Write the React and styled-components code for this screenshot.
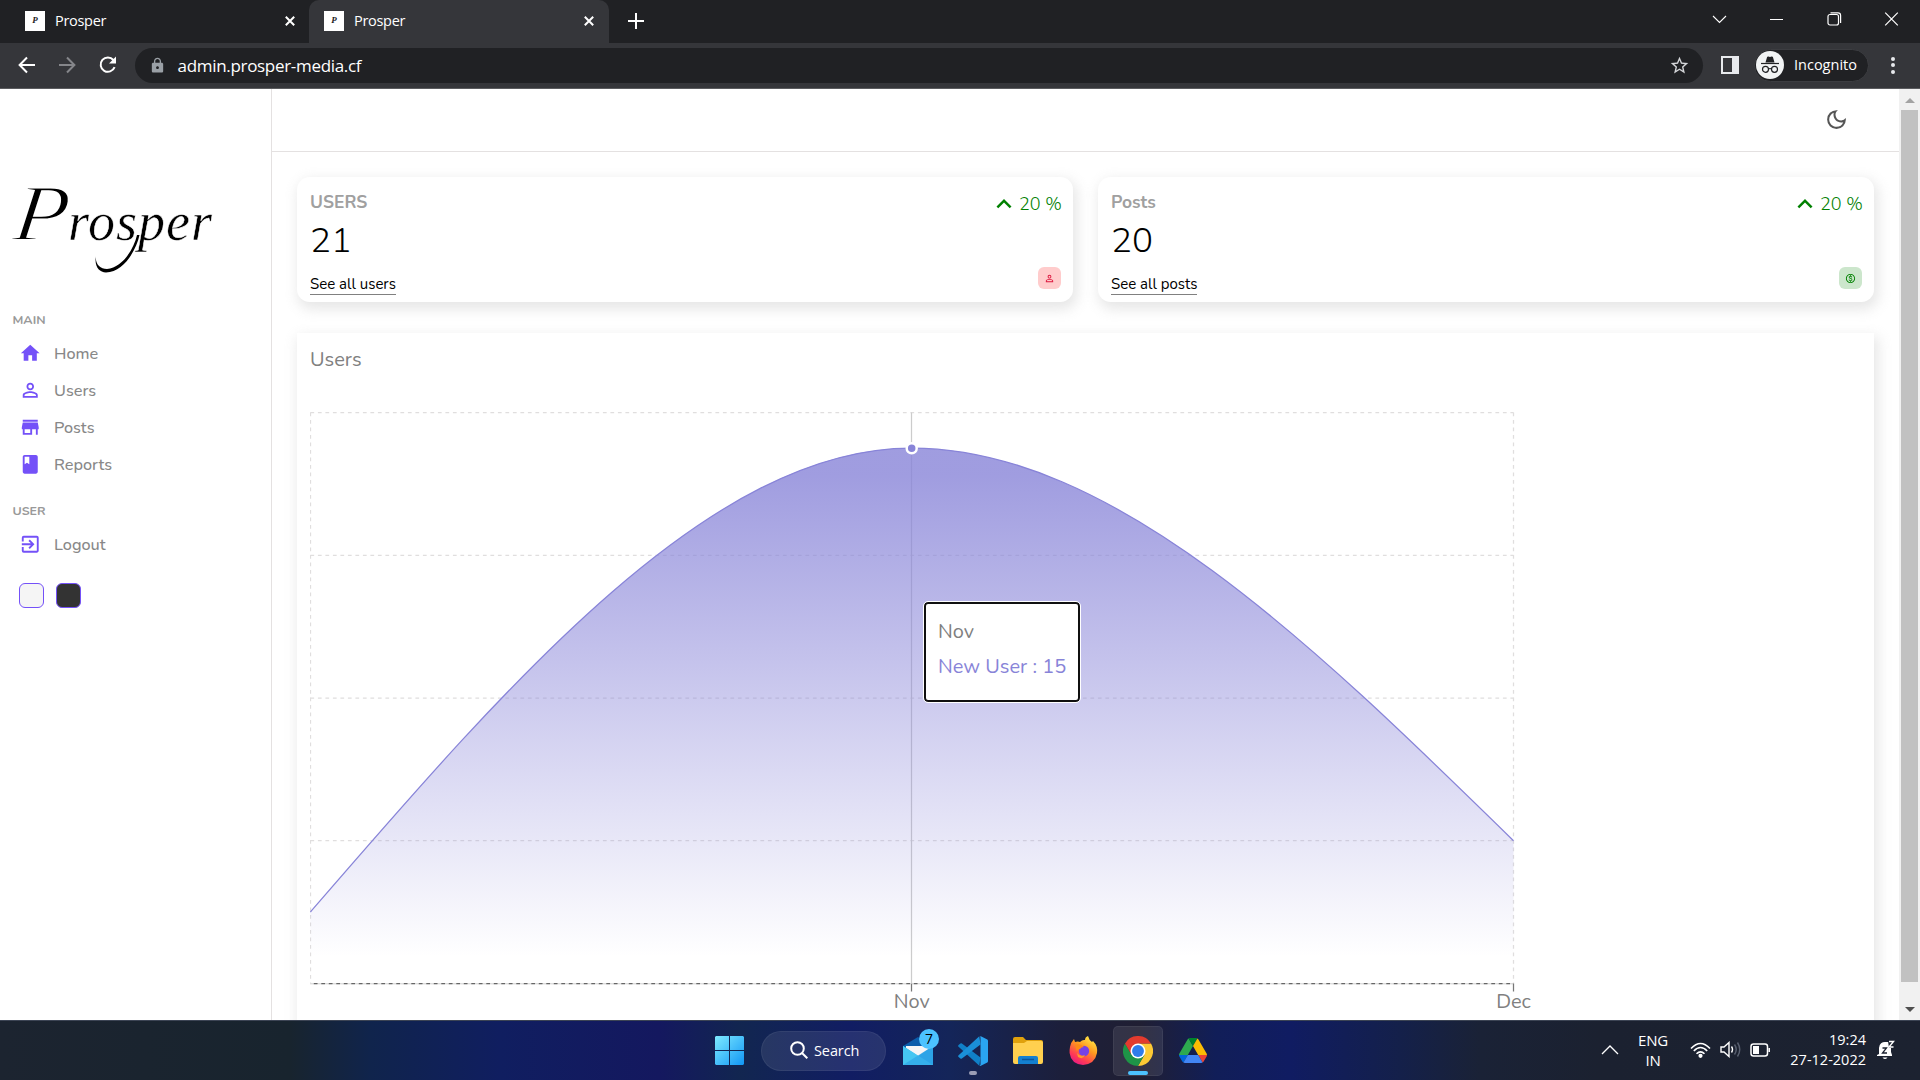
import React from "react";
import styled, { createGlobalStyle } from "styled-components";
import {
  MdHome, MdPersonOutline, MdStore, MdClass, MdExitToApp, MdOutlineDarkMode,
  MdKeyboardArrowUp, MdOutlineMonetizationOn, MdLock, MdStarBorder,
} from "react-icons/md";

const ui = `"Open Sans", "Noto Sans", sans-serif`;
const page = `Nunito, Lato, "Open Sans", sans-serif`;

const Global = createGlobalStyle`
  * { box-sizing: border-box; }
  html, body { margin: 0; padding: 0; overflow: hidden; background: #fff; }
  svg { display: block; flex: none; }
`;

const Screen = styled.div`
  width: 1920px; height: 1080px; display: flex; flex-direction: column;
  overflow: hidden; font-family: ${page};
`;

/* ---------- browser chrome ---------- */
const TabStrip = styled.div`
  height: 43px; background: #202124; display: flex; align-items: stretch; color: #fff;
  font-family: ${ui};
`;
const Tab = styled.div`
  width: ${(p) => p.$w}px; display: flex; align-items: center; padding: 0 ${(p) => (p.$active ? 15 : 14)}px 2px ${(p) => p.$pad}px;
  background: ${(p) => (p.$active ? "#35363a" : "transparent")};
  border-radius: 10px 10px 0 0; gap: 10px;
`;
const Favicon = styled.span`
  width: 20px; height: 20px; background: #fff; color: #222; display: grid; place-items: center;
  font: italic bold 9px/1 "Liberation Serif", serif;
`;
const TabTitle = styled.span`
  flex: 1; font-size: 14.5px; letter-spacing: -0.3px;
`;
const NewTab = styled.div`
  display: flex; align-items: center; padding: 0 0 1px 19px; flex: 1;
`;
const WindowButtons = styled.div`
  display: flex; align-items: center; padding: 0 21px 6px 0; gap: 42.3px;
`;
const Toolbar = styled.div`
  height: 46px; background: #35363a; border-bottom: 1px solid #5b5c5f; display: flex;
  align-items: center; padding: 0 20px 1px 17px; font-family: ${ui}; color: #fff;
`;
const NavButtons = styled.div`
  display: flex; gap: 20px; width: 118px; align-items: center;
`;
const Omnibox = styled.div`
  width: 1568px; height: 35px; border-radius: 18px; background: #202124; display: flex;
  align-items: center; padding: 0 13px 0 14px; color: #9aa0a6; flex: none;
`;
const Url = styled.span`
  flex: 1; color: #fff; font-size: 17px; margin-left: 11.5px; letter-spacing: -0.31px;
`;
const SidePanelIcon = styled.span`
  width: 18px; height: 18px; margin: 0 15px 0 18px; border: solid #e8eaed; border-width: 2px 7px 2px 2px;
`;
const Incognito = styled.div`
  width: 115px; height: 33px; border-radius: 17px; background: #202124; border: 1px solid #3c3d41;
  display: flex; align-items: center; gap: 10px; padding: 0 0 1px 1px; font-size: 14.5px;
`;
const Dots = styled.div`
  margin-left: 22px; display: flex; flex-direction: column; gap: 2.5px;
`;
const Dot = styled.span`
  width: 4px; height: 4px; border-radius: 50%; background: #e8eaed;
`;

/* ---------- page ---------- */
const Viewport = styled.div`
  height: 931px; display: flex; overflow: hidden; background: #fff;
`;
const Sidebar = styled.aside`
  width: 272px; border-right: 1px solid #e4e1e1; flex: none; padding-top: 76px;
`;
const Logo = styled.div`
  position: relative; height: 140px; padding: 18px 0 0 13px; color: #000;
  font-family: "Liberation Serif", serif; font-style: italic; line-height: 60px; white-space: nowrap;
`;
const LogoInitial = styled.span`
  font-size: 80px; display: inline-block; width: 55px; transform: skewX(-7deg) scaleX(1.12);
  transform-origin: 0 75%; -webkit-text-stroke: 1.8px #fff;
`;
const LogoRest = styled.span`
  font-size: 54px; letter-spacing: 1px; -webkit-text-stroke: 0.5px #fff;
`;
const Swash = styled.svg`
  position: absolute; left: 92px; top: 70px;
`;
const SectionLabel = styled.div`
  height: 18px; line-height: 18px; padding-left: 12.5px; font-size: 12.5px; font-weight: 700; color: #999;
  margin: ${(p) => p.$mt || 0}px 0 6px;
`;
const MenuItem = styled.div`
  height: 37px; display: flex; align-items: center; gap: 13px; padding-left: 18.5px; color: #7451f8;
`;
const MenuText = styled.span`
  font-size: 16.25px; font-weight: 550; color: #888;
`;
const Swatches = styled.div`
  display: flex; gap: 12px; padding: 20px 0 0 19px;
`;
const Swatch = styled.span`
  width: 25px; height: 25px; border-radius: 6px; border: 1px solid #7451f8; background: ${(p) => p.$c};
`;
const Main = styled.main`
  width: 1627px; flex: none;
`;
const Navbar = styled.div`
  height: 63px; border-bottom: 1px solid #e4e1e1; display: flex; align-items: center;
  justify-content: flex-end; padding: 0 50px 2px 0; color: #555;
`;
const Cards = styled.div`
  display: flex; gap: 25px; padding: 25px 25px 0;
`;
const cardShadow = `2.5px 5px 12.5px 1.25px rgba(201, 201, 201, 0.47)`;
const Card = styled.section`
  flex: 1; height: 125px; border-radius: 12.5px; box-shadow: ${cardShadow}; padding: 0 12px 0 13px;
  display: flex; justify-content: space-between;
`;
const CardLeft = styled.div`
  display: flex; flex-direction: column; align-items: flex-start; padding-top: 14px;
`;
const CardRight = styled.div`
  display: flex; flex-direction: column; align-items: flex-end; padding-top: 12px;
`;
const CardTitle = styled.span`
  font-size: 17.5px; font-weight: 700; color: #a0a0a0; line-height: 22px;
`;
const Counter = styled.span`
  font-size: 35px; font-weight: 300; line-height: 44px; margin-top: 5.5px;
`;
const CardLink = styled.span`
  font-size: 15px; line-height: 19px; height: 20px; border-bottom: 1px solid gray; margin-top: 12.5px;
  font-weight: 390; color: #000;
`;
const Percent = styled.div`
  display: flex; align-items: center; color: green; font-size: 18px; height: 30px; font-weight: 350;
`;
const PercentText = styled.span`
  width: 42px; white-space: nowrap;
`;
const Badge = styled.span`
  width: 23px; height: 22px; border-radius: 6px; display: grid; place-items: center; margin-top: 48px;
  background: ${(p) => p.$bg}; color: ${(p) => p.$fg};
`;
const ChartCard = styled.section`
  margin: 31px 25px 0; height: 720px; box-shadow: ${cardShadow}; padding: 14px 0 0 13px; position: relative;
`;
const ChartTitle = styled.div`
  font-size: 20px; font-weight: 390; color: gray; line-height: 25px; height: 56px;
`;
const ChartSvg = styled.svg`
  font-family: ${page};
`;
const Tooltip = styled.div`
  position: absolute; left: 627px; top: 268.5px; width: 156px; height: 100px; background: #fff;
  border: 2px solid #101010; border-radius: 4px; outline: 1px solid #fff; padding: 10px 12px;
  font-size: 20px; font-weight: 400; line-height: 35px; color: gray; white-space: nowrap;
`;
const TooltipValue = styled.div`
  color: #8884d8;
`;
const ScrollBar = styled.div`
  width: 21px; background: #f1f1f1; display: flex; flex-direction: column; align-items: center;
  padding: 9px 0 8px; flex: none;
`;
const Thumb = styled.div`
  width: 17px; height: 872px; background: #c1c1c1; margin: 7px 0 25px;
`;
const Arrow = styled.span`
  border: 5px solid transparent; border-top-width: ${(p) => (p.$down ? 5 : 0)}px;
  border-bottom-width: ${(p) => (p.$down ? 0 : 5)}px;
  border-${(p) => (p.$down ? "top" : "bottom")}-color: ${(p) => (p.$down ? "#505050" : "#a3a3a3")};
`;

/* ---------- taskbar ---------- */
const Taskbar = styled.footer`
  height: 60px; border-top: 1px solid #3c4454; display: flex; align-items: center; color: #fff;
  font-family: ${ui};
  background: linear-gradient(90deg, #1c2430 0, #18242e 290px, #10244c 370px, #101e60 500px,
    #14185f 660px, #122650 740px, #111d63 850px, #142559 950px, #1c1f3b 1060px, #201f33 1140px,
    #111e58 1215px, #101c62 1290px, #14204a 1400px, #1a2236 1480px, #1b2130 1600px, #1c2230 1920px);
`;
const Apps = styled.div`
  display: flex; align-items: center; margin-left: 715px; height: 60px;
`;
const SearchPill = styled.div`
  width: 125px; height: 40px; border-radius: 20px; margin: 0 17px; background: rgba(255,255,255,0.09);
  border: 1px solid rgba(255,255,255,0.06); display: flex; align-items: center; padding: 0 0 1px 28px;
  font-size: 14.5px; letter-spacing: -0.1px; gap: 6px;
`;
const AppButton = styled.div`
  position: relative; width: ${(p) => p.$w || 30}px; height: 50px; margin-right: ${(p) => p.$mr || 0}px;
  display: grid; place-items: center; border-radius: 5px;
  background: ${(p) => (p.$on ? "rgba(255,255,255,0.09)" : "none")};
  box-shadow: ${(p) => (p.$on ? "inset 0 0 0 1px rgba(255,255,255,.06)" : "none")};
`;
const Indicator = styled.span`
  position: absolute; bottom: 1px; left: 50%; transform: translateX(-50%); height: 4px; border-radius: 2px;
  width: ${(p) => p.$w}px; background: ${(p) => p.$c};
`;
const Count = styled.span`
  position: absolute; left: 16px; top: 3px; width: 20px; height: 20px; border-radius: 50%;
  background: #4cc2ff; color: #000; font-size: 14px; line-height: 20px; text-align: center;
`;
const Tray = styled.div`
  margin-left: auto; display: flex; align-items: center; padding: 0 25px 2px 0; font-size: 15px; line-height: 20px;
`;
const Lang = styled.div`
  width: 34px; margin: 0 20px 0 17px; text-align: center; letter-spacing: -0.2px;
`;
const TrayIcons = styled.div`
  display: flex; gap: 9px; align-items: center;
`;
const Clock = styled.div`
  width: 84px; text-align: right; margin: 0 11px 0 11px; font-size: 14.5px; white-space: nowrap;
`;

const Stroke = ({ w, h = w, sw = 2, c = "#fff", vb, children }) => (
  <svg width={w} height={h} viewBox={vb || `0 0 ${w} ${h}`} fill="none" stroke={c} strokeWidth={sw}>{children}</svg>
);
const Close = () => <Stroke w={10}><path d="M.8.8l8.4 8.4M9.2.8L.8 9.2" /></Stroke>;

const BrowserTop = () => (
  <>
    <TabStrip>
      <Tab $w={309} $pad={25}><Favicon>P</Favicon><TabTitle>Prosper</TabTitle><Close /></Tab>
      <Tab $w={300} $pad={15} $active><Favicon>P</Favicon><TabTitle>Prosper</TabTitle><Close /></Tab>
      <NewTab><Stroke w={16}><path d="M8 0v16M0 8h16" /></Stroke></NewTab>
      <WindowButtons>
        <Stroke w={15} h={14} sw={1.1}><path d="M1 4l6.5 6.5L14 4" /></Stroke>
        <Stroke w={15} h={14} sw={1}><path d="M1 7.5h13" /></Stroke>
        <Stroke w={15} h={14} sw={1.2}>
          <rect x="1" y="2.5" width="10.5" height="10.5" rx="2" />
          <path d="M3.5.8h7.5a2.6 2.6 0 0 1 2.6 2.6v7.6" />
        </Stroke>
        <Stroke w={15} h={14} sw={1.2}><path d="M1.2.6l12.6 12.8M13.8.6L1.2 13.4" /></Stroke>
      </WindowButtons>
    </TabStrip>
    <Toolbar>
      <NavButtons>
        <Stroke w={20}><path d="M18 10H3M10 2.5L2.6 10l7.4 7.5" /></Stroke>
        <Stroke w={20} c="#85868a"><path d="M2 10h15M10 2.5l7.4 7.5-7.4 7.5" /></Stroke>
        <Stroke w={20}><path d="M17.6 12.2A7.2 7.2 0 1 1 16.4 5l1.6 1.9" /><path d="M19 1.5v7h-7z" fill="#fff" stroke="none" /></Stroke>
      </NavButtons>
      <Omnibox>
        <MdLock size={17} />
        <Url>admin.prosper-media.cf</Url>
        <MdStarBorder size={21} color="#d4d6d9" />
      </Omnibox>
      <SidePanelIcon />
      <Incognito>
        <svg width="28" height="28" viewBox="0 0 28 28">
          <circle cx="14" cy="14" r="14" fill="#f1f3f4" />
          <path d="M9.5 11.4l1.6-5.3c.2-.6.8-.8 1.3-.6l1.6.5 1.6-.5c.5-.2 1.1 0 1.3.6l1.6 5.3z" fill="#202124" />
          <path d="M5 12.5h18" stroke="#202124" strokeWidth="1.2" />
          <g fill="none" stroke="#202124" strokeWidth="1.2"><circle cx="9.5" cy="18.3" r="3" /><circle cx="18.5" cy="18.3" r="3" /><path d="M12.5 18q1.5-1 3 0" /></g>
        </svg>
        Incognito
      </Incognito>
      <Dots><Dot /><Dot /><Dot /></Dots>
    </Toolbar>
  </>
);

const Side = () => (
  <Sidebar>
    <Logo>
      <LogoInitial>P</LogoInitial><LogoRest>rosper</LogoRest>
      <Swash width="50" height="40" viewBox="0 0 50 40">
        <path d="M45 0C42 14 30 33 15 34C8 34 3 29 4 21C2 31 7 37.500 14 37.500C31 37.500 44 16 47.500 0z" />
      </Swash>
    </Logo>
    <SectionLabel $mt={6}>MAIN</SectionLabel>
    <MenuItem><MdHome size={22.5} /><MenuText>Home</MenuText></MenuItem>
    <MenuItem><MdPersonOutline size={22.5} /><MenuText>Users</MenuText></MenuItem>
    <MenuItem><MdStore size={22.5} /><MenuText>Posts</MenuText></MenuItem>
    <MenuItem><MdClass size={22.5} /><MenuText>Reports</MenuText></MenuItem>
    <SectionLabel $mt={19}>USER</SectionLabel>
    <MenuItem><MdExitToApp size={22.5} /><MenuText>Logout</MenuText></MenuItem>
    <Swatches><Swatch $c="whitesmoke" /><Swatch $c="#333" /></Swatches>
  </Sidebar>
);

const Widget = ({ title, count, link, bg, fg, children }) => (
  <Card>
    <CardLeft>
      <CardTitle>{title}</CardTitle>
      <Counter>{count}</Counter>
      <CardLink>{link}</CardLink>
    </CardLeft>
    <CardRight>
      <Percent><MdKeyboardArrowUp size={30} /><PercentText>20 %</PercentText></Percent>
      <Badge $bg={bg} $fg={fg}>{children}</Badge>
    </CardRight>
  </Card>
);

/* plot area: x 0..1203.5, y 9.6..580.5 */
const rows = [9.6, 152.3, 295, 437.7, 580.5];
const curve = "M0.400 509C201 277 401 45 601.500 45C802 45 1003 241.500 1203.500 437.700";
const Chart = () => (
  <ChartSvg width="1300" height="640" viewBox="0 0 1300 640">
    <defs>
      <linearGradient id="total" x1="0" y1="0" x2="0" y2="1">
        <stop offset="5%" stopColor="#8884d8" stopOpacity="0.8" />
        <stop offset="95%" stopColor="#8884d8" stopOpacity="0" />
      </linearGradient>
    </defs>
    <g stroke="#e0dede" strokeWidth="1.25" strokeDasharray="3.75 3.75">
      {rows.map((y) => <path key={y} d={`M0.400 ${y}H1203.500`} />)}
      <path d="M0.500 9.600V580.500M1203.500 9.600V580.500" />
    </g>
    <path d="M0 580.500H1203.500" stroke="#ddd" strokeWidth="1.25" />
    <path d="M3.800 580.500H1203.500" stroke="#666" strokeWidth="1.25" strokeDasharray="3.75 3.75" />
    <path d="M601.500 580.500v8M1203.500 580.500v8" stroke="#777" strokeWidth="1.25" />
    <path d="M601.500 9.600V580.500" stroke="#ccc" strokeWidth="1.25" />
    <path d={`${curve}V580.500H0.400z`} fill="url(#total)" />
    <path d={curve} fill="none" stroke="#8884d8" strokeWidth="1.25" />
    <circle cx="601.7" cy="45.3" r="5" fill="#8884d8" stroke="#fff" strokeWidth="2.5" />
    <g fill="#808080" fontSize="20" fontWeight="390" textAnchor="middle">
      <text x="601.7" y="604.5">Nov</text>
      <text x="1203.5" y="604.5">Dec</text>
    </g>
  </ChartSvg>
);

const Windows = () => (
  <svg width="29" height="29" viewBox="0 0 29 29">
    <defs><linearGradient id="win" x1="0" y1="0" x2="1" y2="1"><stop stopColor="#7eeaff" /><stop offset="1" stopColor="#1196f5" /></linearGradient></defs>
    <path d="M1 0h13v14H0V1zM15 0h13l1 1v13H15zM0 15h14v14H1l-1-1zM15 15h14v13l-1 1H15z" fill="url(#win)" />
  </svg>
);
const Mail = () => (
  <svg width="30" height="28" viewBox="0 0 30 28">
    <path d="M0 9L15 0l15 9v5H0z" fill="#0b5cab" />
    <path d="M3 9h24v10H3z" fill="#f4f4f6" />
    <path d="M0 9l15 10L30 9v19H0z" fill="#2fa8e8" />
    <path d="M0 9l30 19H0z" fill="#45c6f2" /><path d="M0 28L30 9v19z" fill="#2ba0e6" opacity=".6" />
  </svg>
);
const Code = () => (
  <svg width="30" height="30" viewBox="0 0 100 100">
    <path d="M71 99L2 36a4 4 0 0 1 0-6l6-5a4 4 0 0 1 5 0l62 47z" fill="#1080c8" />
    <path d="M71 1L2 64a4 4 0 0 0 0 6l6 5a4 4 0 0 0 5 0l62-47z" fill="#1a8fd8" />
    <path d="M71 99c4 2 5 0 7-1l18-9c3-1 4-3 4-6V17c0-3-1-5-4-6L78 2c-2-1-4-2-7-1 2 0 4 2 4 5v88c0 3-2 5-4 5z" fill="#2aa5f2" />
  </svg>
);
const Folder = () => (
  <svg width="30" height="27" viewBox="0 0 30 27">
    <path d="M0 2q0-2 2-2h8l3 3h15q2 0 2 2v6H0z" fill="#e0a10c" />
    <path d="M0 6h11l3-2h14q2 0 2 2v19q0 2-2 2H2q-2 0-2-2z" fill="#ffd04f" />
    <path d="M5 27v-6q0-2 2-2h16q2 0 2 2v6z" fill="#1480d0" /><path d="M9 22.500h12" stroke="#0b559b" strokeWidth="1.500" />
  </svg>
);
const Firefox = () => (
  <svg width="29" height="29" viewBox="0 0 29 29">
    <defs><linearGradient id="fx" x1=".8" y1="0" x2=".2" y2="1"><stop stopColor="#fff14a" /><stop offset=".4" stopColor="#ff9a1f" /><stop offset=".75" stopColor="#ff3a55" /><stop offset="1" stopColor="#e3158c" /></linearGradient></defs>
    <path d="M1 11Q2 6 5 3l1 3q3-1 5 0 2-2 4-2l1 0Q16 1 19 0q1 4 4 6l1-1q5 5 4 12-2 11-14 12Q2 28 .6 17q-.2-3 .4-6z" fill="url(#fx)" />
    <circle cx="15" cy="15" r="5.200" fill="#7542e5" />
    <path d="M6 9q5-2 9 2-3 0-4 2-3 0-3 3z" fill="#ff8a16" /><path d="M8 17q3 4 8 2-2 5-7 2z" fill="#ff9a2a" />
  </svg>
);
const Chrome = () => (
  <svg width="30" height="30" viewBox="0 0 48 48">
    <path d="M24 24V12h20.800A24 24 0 0 1 24 48l10.400-18z" fill="#fcc934" />
    <path d="M24 24l10.400 6L24 48A24 24 0 0 1 3.200 12l10.400 18z" fill="#1e9447" />
    <path d="M24 12h20.800A24 24 0 0 0 3.200 12l10.400 18z" fill="#e33b2e" />
    <circle cx="24" cy="24" r="12" fill="#fff" /><circle cx="24" cy="24" r="9.500" fill="#2f7ceb" />
  </svg>
);
const Drive = () => (
  <svg width="28" height="25" viewBox="0 0 87.3 78">
    <path d="M6.600 66.850l3.850 6.650c.8 1.400 1.950 2.500 3.300 3.300L27.500 53H0c0 1.550.4 3.100 1.200 4.500z" fill="#0066da" />
    <path d="M43.650 25L29.900 1.200c-1.350.8-2.500 1.900-3.300 3.300l-25.400 44A9 9 0 0 0 0 53h27.500z" fill="#2da94f" />
    <path d="M73.550 76.800c1.350-.8 2.500-1.900 3.300-3.300l9.250-16c.8-1.400 1.200-2.950 1.200-4.500H59.800z" fill="#ea4335" />
    <path d="M43.650 25L57.400 1.200C56.050.4 54.500 0 52.900 0H34.400c-1.600 0-3.150.45-4.500 1.200z" fill="#00832d" />
    <path d="M59.800 53H27.500L13.750 76.800c1.350.8 2.900 1.200 4.500 1.200h50.800c1.600 0 3.150-.45 4.500-1.200z" fill="#4285f4" />
    <path d="M73.400 26.500L60.700 4.500c-.8-1.400-1.950-2.500-3.300-3.300L43.650 25 59.800 53h27.450c0-1.550-.4-3.100-1.200-4.500z" fill="#fbbc04" />
  </svg>
);

const Bottom = () => (
  <Taskbar>
    <Apps>
      <Windows />
      <SearchPill><Stroke w={18}><circle cx="7.500" cy="7.500" r="6.300" /><path d="M12 12l5.300 5.300" /></Stroke>Search</SearchPill>
      <AppButton $mr={25}><Mail /><Count>7</Count></AppButton>
      <AppButton $mr={25}><Code /><Indicator $w={8} $c="#9a9db5" /></AppButton>
      <AppButton $mr={25}><Folder /></AppButton>
      <AppButton $mr={15}><Firefox /></AppButton>
      <AppButton $w={50} $mr={16} $on><Chrome /><Indicator $w={20} $c="#4cc2ff" /></AppButton>
      <AppButton $w={28}><Drive /></AppButton>
    </Apps>
    <Tray>
      <Stroke w={18} h={10} sw={1.3}><path d="M1 9l8-8 8 8" /></Stroke>
      <Lang>ENG<br />IN</Lang>
      <TrayIcons>
        <Stroke w={21} h={16} sw={1.6}>
          <path d="M1 6.500Q10.500-3.500 20 6.500M3.800 9Q10.500 2 17.200 9M6.500 11.800q4-4 8 0" /><circle cx="10.500" cy="13.800" r="1.300" fill="#fff" />
        </Stroke>
        <Stroke w={21} h={17} sw={1.4}>
          <path d="M1 6h3l5-4.500v14L4 11H1zM11.500 5.500q2 3 0 6" /><path d="M14.500 3.500q3.500 5 0 10M17.500 1.500q4.500 7 0 14" stroke="#596070" />
        </Stroke>
        <Stroke w={21} h={14} sw={1.5}>
          <rect x="1" y="1" width="16.500" height="12" rx="2.500" /><path d="M3 3h6v8H3z" fill="#fff" stroke="none" /><path d="M19.200 5v4" />
        </Stroke>
      </TrayIcons>
      <Clock>19:24<br />27-12-2022</Clock>
      <svg width="18" height="20" viewBox="0 0 18 20">
        <path d="M2 14V8a6 6 0 0 1 7-6h5v10l1 3v1H0v-1z" fill="#fff" /><path d="M5.500 17.500q2.500 3 5 0z" fill="#fff" />
        <path d="M5.500 8h4l-4 5h4.500" fill="none" stroke="#1c2230" strokeWidth="1.300" />
        <path d="M11 1h6v7h-5z" fill="#1c2230" /><path d="M12 1.500h4.500l-4.500 5.500h4.500" fill="none" stroke="#fff" strokeWidth="1.400" />
      </svg>
    </Tray>
  </Taskbar>
);

export default function App() {
  return (
    <Screen>
      <Global />
      <BrowserTop />
      <Viewport>
        <Side />
        <Main>
          <Navbar><MdOutlineDarkMode size={25} /></Navbar>
          <Cards>
            <Widget title="USERS" count="21" link="See all users" bg="#ffcccc" fg="crimson"><MdPersonOutline size={11} /></Widget>
            <Widget title="Posts" count="20" link="See all posts" bg="#cce6cc" fg="green"><MdOutlineMonetizationOn size={11} /></Widget>
          </Cards>
          <ChartCard>
            <ChartTitle>Users</ChartTitle>
            <Chart />
            <Tooltip>Nov<TooltipValue>New User : 15</TooltipValue></Tooltip>
          </ChartCard>
        </Main>
        <ScrollBar><Arrow /><Thumb /><Arrow $down /></ScrollBar>
      </Viewport>
      <Bottom />
    </Screen>
  );
}
